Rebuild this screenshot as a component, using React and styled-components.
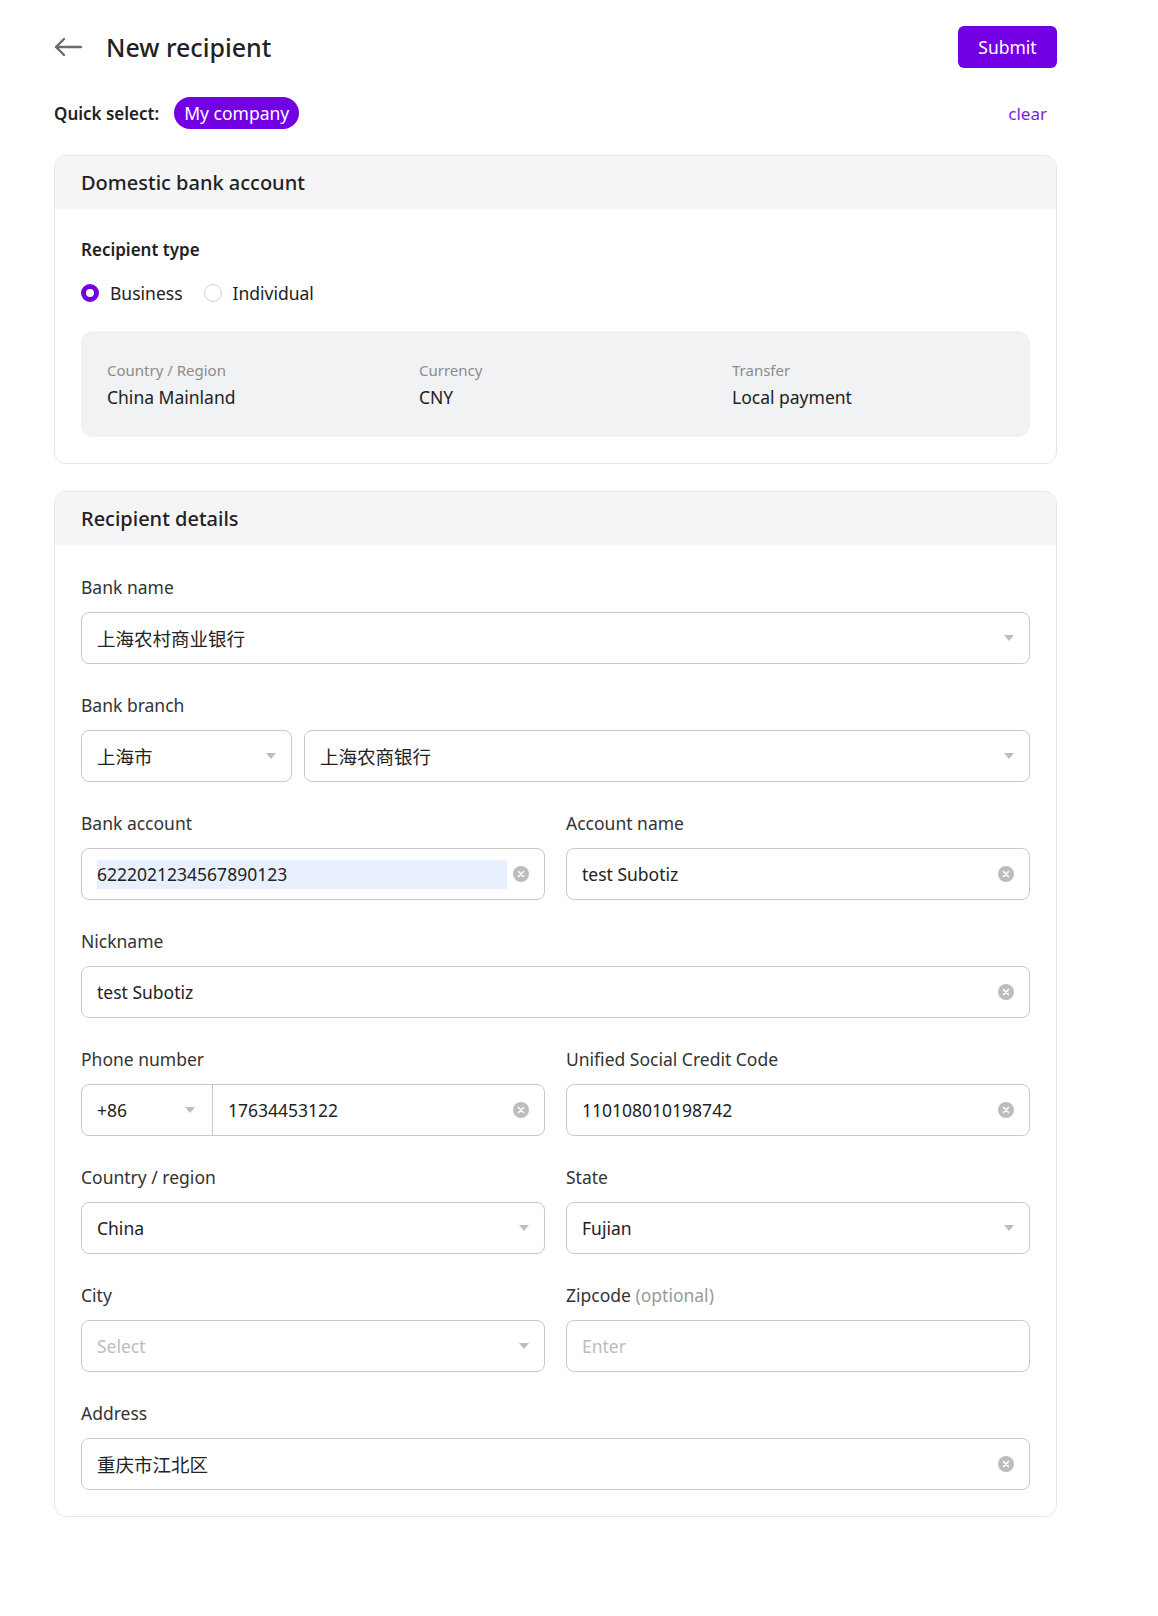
import React from 'react'
import styled, { createGlobalStyle } from 'styled-components'

const GlobalStyle = createGlobalStyle`
  * { box-sizing: border-box; }
  body {
    margin: 0;
    background: #fff;
    font-family: "Noto Sans", "Noto Sans CJK SC", sans-serif;
    color: #222;
  }
`

const Page = styled.div`
  width: 1003px;
  margin-left: 54px;
  padding: 26px 0 40px;
`

const Header = styled.div`
  display: flex;
  align-items: center;
  justify-content: space-between;
  height: 42px;
`

const TitleWrap = styled.div`
  display: flex;
  align-items: center;
  gap: 24px;
`

const BackButton = styled.button`
  border: 0;
  background: none;
  padding: 0;
  display: flex;
  color: #6b6b6b;
  cursor: pointer;
`

const Title = styled.h1`
  margin: 0;
  font-size: 25px;
  font-weight: 500;
  color: #222;
`

const SubmitButton = styled.button`
  height: 42px;
  width: 99px;
  border: 0;
  border-radius: 6px;
  background: #7200e3;
  color: #fff;
  font-family: inherit;
  font-size: 17.5px;
  cursor: pointer;
`

const QuickRow = styled.div`
  display: flex;
  align-items: center;
  justify-content: space-between;
  margin-top: 29px;
  height: 32px;
`

const QuickLeft = styled.div`
  display: flex;
  align-items: center;
  gap: 15px;
`

const QuickLabel = styled.span`
  font-size: 17px;
  font-weight: 600;
`

const Pill = styled.span`
  height: 32px;
  padding: 0 10px;
  display: flex;
  align-items: center;
  border-radius: 16px;
  background: #7200e3;
  color: #fff;
  font-size: 17.5px;
`

const ClearLink = styled.a`
  color: #7a1fd6;
  font-size: 17px;
  margin-right: 10px;
  cursor: pointer;
`

const Card = styled.section`
  margin-top: ${p => p.$top}px;
  border: 1px solid #e6e6e8;
  border-radius: 12px;
  overflow: hidden;
`

const CardHeader = styled.div`
  height: 53px;
  background: #f5f5f7;
  padding: 0 26px;
  display: flex;
  align-items: center;
  font-size: 20px;
  font-weight: 500;
`

const CardBody = styled.div`
  padding: 29px 26px 26px;
`

const SectionLabel = styled.div`
  font-size: 17px;
  font-weight: 600;
  line-height: 24px;
`

const RadioGroup = styled.div`
  display: flex;
  align-items: center;
  gap: 21px;
  margin-top: 19px;
`

const RadioItem = styled.label`
  display: flex;
  align-items: center;
  gap: 11px;
  font-size: 17.5px;
`

const RadioDot = styled.span`
  width: 18px;
  height: 18px;
  border-radius: 50%;
  border: ${p => (p.$checked ? '5.5px solid #7200e3' : '1px solid #d4d4d4')};
  background: #fff;
`

const InfoBox = styled.div`
  margin-top: 26px;
  height: 106px;
  border-radius: 12px;
  background: #f1f2f4;
  padding: 0 0 0 26px;
  display: grid;
  grid-template-columns: 312px 313px 1fr;
  align-content: center;
`

const InfoItem = styled.div`
  display: flex;
  flex-direction: column;
  gap: 5px;
`

const InfoLabel = styled.span`
  font-size: 15px;
  color: #8c8c8c;
`

const InfoValue = styled.span`
  font-size: 17.5px;
  color: #222;
`

const Fields = styled.div`
  display: grid;
  grid-template-columns: 1fr 1fr;
  column-gap: 21px;
  row-gap: 29px;
  padding-top: 1px;
`

const Field = styled.div`
  grid-column: ${p => (p.$full ? '1 / -1' : 'auto')};
  display: flex;
  flex-direction: column;
`

const Label = styled.label`
  font-size: 17.5px;
  line-height: 24px;
  color: #333;
  margin-bottom: 13px;
`

const Optional = styled.span`
  color: #999;
`

const Control = styled.div`
  height: 52px;
  border: 1px solid #c9c9c9;
  border-radius: 8px;
  background: #fff;
  display: flex;
  align-items: center;
  padding: 0 15px;
  flex: ${p => p.$flex || 'none'};
  width: ${p => (p.$width ? `${p.$width}px` : 'auto')};
`

const Value = styled.span`
  flex: 1;
  font-size: ${p => (p.$cjk ? '18.5px' : '17.5px')};
  color: ${p => (p.$placeholder ? '#bcbcbc' : '#222')};
  white-space: nowrap;
`

const Selected = styled.span`
  flex: 1;
  font-size: 17.5px;
  color: #222;
  background: #e8f0fe;
  line-height: 29px;
  margin-right: 6px;
`

const Split = styled.div`
  display: flex;
  gap: 12px;
`

const PhoneControl = styled.div`
  height: 52px;
  border: 1px solid #c9c9c9;
  border-radius: 8px;
  display: flex;
  overflow: hidden;
`

const PhonePrefix = styled.div`
  width: 131px;
  border-right: 1px solid #c9c9c9;
  display: flex;
  align-items: center;
  padding: 0 17px 0 15px;
`

const PhoneInput = styled.div`
  flex: 1;
  display: flex;
  align-items: center;
  padding: 0 15px;
`

const Caret = () => (
  <svg width="10" height="6" viewBox="0 0 10 6">
    <path d="M0 0h10L5 6z" fill="#bdbdbd" />
  </svg>
)

const ClearIcon = () => (
  <svg width="16" height="16" viewBox="0 0 16 16">
    <circle cx="8" cy="8" r="8" fill="#bdbdbd" />
    <path d="M5.5 5.5l5 5M10.5 5.5l-5 5" stroke="#fff" strokeWidth="1.6" strokeLinecap="round" />
  </svg>
)

const ArrowLeft = () => (
  <svg width="28" height="20" viewBox="0 0 28 20" fill="none" stroke="currentColor" strokeWidth="2.4" strokeLinecap="round" strokeLinejoin="round">
    <path d="M27 10H2M10 2L2 10l8 8" />
  </svg>
)

function SelectBox({ value, placeholder, width, flex, cjk }) {
  return (
    <Control $width={width} $flex={flex}>
      <Value $placeholder={!value} $cjk={cjk}>{value || placeholder}</Value>
      <Caret />
    </Control>
  )
}

function TextBox({ value, placeholder, clearable = true, selected, cjk }) {
  return (
    <Control>
      {selected
        ? <Selected>{value}</Selected>
        : <Value $placeholder={!value} $cjk={cjk}>{value || placeholder}</Value>}
      {clearable && value && <ClearIcon />}
    </Control>
  )
}

const info = [
  { label: 'Country / Region', value: 'China Mainland' },
  { label: 'Currency', value: 'CNY' },
  { label: 'Transfer', value: 'Local payment' },
]

export default function App() {
  return (
    <>
      <GlobalStyle />
      <Page>
        <Header>
          <TitleWrap>
            <BackButton><ArrowLeft /></BackButton>
            <Title>New recipient</Title>
          </TitleWrap>
          <SubmitButton>Submit</SubmitButton>
        </Header>

        <QuickRow>
          <QuickLeft>
            <QuickLabel>Quick select:</QuickLabel>
            <Pill>My company</Pill>
          </QuickLeft>
          <ClearLink>clear</ClearLink>
        </QuickRow>

        <Card $top={26}>
          <CardHeader>Domestic bank account</CardHeader>
          <CardBody>
            <SectionLabel>Recipient type</SectionLabel>
            <RadioGroup>
              <RadioItem><RadioDot $checked />Business</RadioItem>
              <RadioItem><RadioDot />Individual</RadioItem>
            </RadioGroup>
            <InfoBox>
              {info.map(item => (
                <InfoItem key={item.label}>
                  <InfoLabel>{item.label}</InfoLabel>
                  <InfoValue>{item.value}</InfoValue>
                </InfoItem>
              ))}
            </InfoBox>
          </CardBody>
        </Card>

        <Card $top={27}>
          <CardHeader>Recipient details</CardHeader>
          <CardBody>
            <Fields>
              <Field $full>
                <Label>Bank name</Label>
                <SelectBox value="上海农村商业银行" cjk />
              </Field>
              <Field $full>
                <Label>Bank branch</Label>
                <Split>
                  <SelectBox value="上海市" width={211} cjk />
                  <SelectBox value="上海农商银行" flex="1" cjk />
                </Split>
              </Field>
              <Field>
                <Label>Bank account</Label>
                <TextBox value="6222021234567890123" selected />
              </Field>
              <Field>
                <Label>Account name</Label>
                <TextBox value="test Subotiz" />
              </Field>
              <Field $full>
                <Label>Nickname</Label>
                <TextBox value="test Subotiz" />
              </Field>
              <Field>
                <Label>Phone number</Label>
                <PhoneControl>
                  <PhonePrefix>
                    <Value>+86</Value>
                    <Caret />
                  </PhonePrefix>
                  <PhoneInput>
                    <Value>17634453122</Value>
                    <ClearIcon />
                  </PhoneInput>
                </PhoneControl>
              </Field>
              <Field>
                <Label>Unified Social Credit Code</Label>
                <TextBox value="110108010198742" />
              </Field>
              <Field>
                <Label>Country / region</Label>
                <SelectBox value="China" />
              </Field>
              <Field>
                <Label>State</Label>
                <SelectBox value="Fujian" />
              </Field>
              <Field>
                <Label>City</Label>
                <SelectBox placeholder="Select" />
              </Field>
              <Field>
                <Label>Zipcode <Optional>(optional)</Optional></Label>
                <TextBox placeholder="Enter" />
              </Field>
              <Field $full>
                <Label>Address</Label>
                <TextBox value="重庆市江北区" cjk />
              </Field>
            </Fields>
          </CardBody>
        </Card>
      </Page>
    </>
  )
}
